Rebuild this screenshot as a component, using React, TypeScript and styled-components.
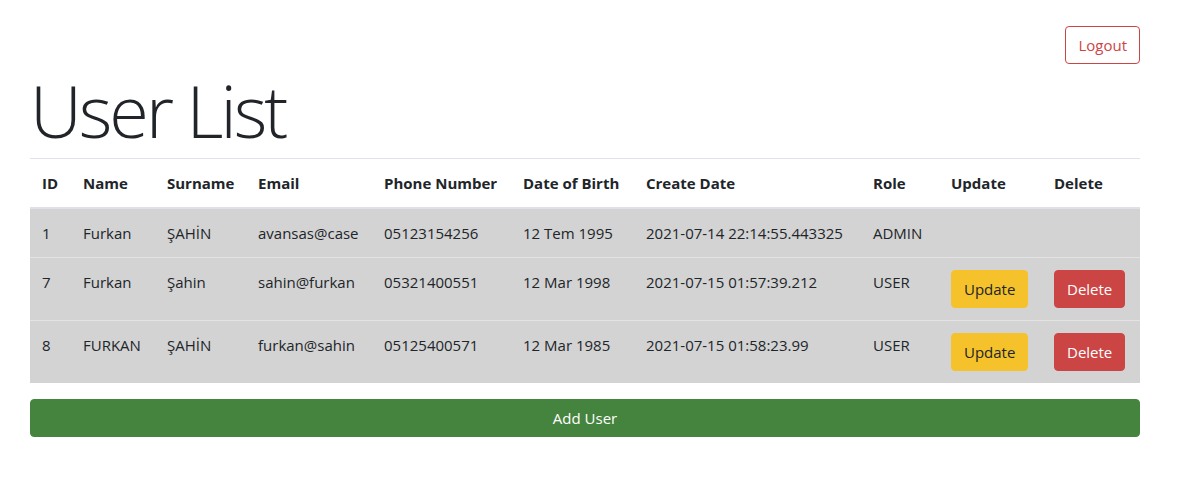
import React from "react";
import styled, { createGlobalStyle } from "styled-components";

const GlobalStyle = createGlobalStyle`
  html, body { margin: 0; padding: 0; background: #fff; }
  body {
    font-family: "Open Sans", "Noto Sans", "Liberation Sans", sans-serif;
    font-size: 16px;
    line-height: 1.5;
    color: #212529;
  }
  * { box-sizing: border-box; }
`;

const Page = styled.div`
  padding: 26px 46px 40px 30px;
  display: flex;
  flex-direction: column;
`;

const TopBar = styled.div`
  display: flex;
  justify-content: flex-end;
`;

const Button = styled.button<{ $variant: "outline-danger" | "warning" | "danger" | "success"; $block?: boolean }>`
  font-family: inherit;
  font-size: 15px;
  line-height: 24px;
  padding: 6px 12px;
  border-radius: 4px;
  border: 1px solid transparent;
  cursor: pointer;
  white-space: nowrap;
  ${({ $block }) => ($block ? "width: 100%; display: block;" : "")}
  ${({ $variant }) => {
    switch ($variant) {
      case "outline-danger":
        return "background: #fff; color: #cc4545; border-color: #cc4545;";
      case "warning":
        return "background: #f5c22b; color: #212529; border-color: #f5c22b;";
      case "danger":
        return "background: #cc4545; color: #fff; border-color: #cc4545;";
      case "success":
        return "background: #45843e; color: #fff; border-color: #45843e;";
    }
  }}
`;

const Title = styled.h1`
  margin: 3px 0 5px;
  font-size: 72px;
  font-weight: 300;
  line-height: 86px;
  letter-spacing: -3px;
  color: #212529;
`;

const Table = styled.table`
  width: 100%;
  border-collapse: collapse;
  table-layout: fixed;
`;

const Th = styled.th`
  text-align: left;
  font-weight: 700;
  padding: 12px;
  vertical-align: bottom;
  border-top: 1px solid #dee2e6;
  border-bottom: 2px solid #dee2e6;
  white-space: nowrap;
  font-size: 15px;
  line-height: 24px;
`;

const Tr = styled.tr`
  background: #d3d3d3;
`;

const Td = styled.td`
  padding: 12px;
  vertical-align: top;
  border-top: 1px solid #e3e3e3;
  white-space: nowrap;
  font-size: 15px;
  line-height: 24px;
`;

const AddWrap = styled.div`
  margin-top: 16px;
`;

const cols = [41, 84, 91, 126, 139, 123, 227, 78, 103, 98];
const headers = ["ID", "Name", "Surname", "Email", "Phone Number", "Date of Birth", "Create Date", "Role", "Update", "Delete"];

type User = {
  id: number;
  name: string;
  surname: string;
  email: string;
  phone: string;
  dob: string;
  created: string;
  role: string;
};

const users: User[] = [
  { id: 1, name: "Furkan", surname: "ŞAHİN", email: "avansas@case", phone: "05123154256", dob: "12 Tem 1995", created: "2021-07-14 22:14:55.443325", role: "ADMIN" },
  { id: 7, name: "Furkan", surname: "Şahin", email: "sahin@furkan", phone: "05321400551", dob: "12 Mar 1998", created: "2021-07-15 01:57:39.212", role: "USER" },
  { id: 8, name: "FURKAN", surname: "ŞAHİN", email: "furkan@sahin", phone: "05125400571", dob: "12 Mar 1985", created: "2021-07-15 01:58:23.99", role: "USER" },
];

export default function App() {
  return (
    <>
      <GlobalStyle />
      <Page>
        <TopBar>
          <Button $variant="outline-danger">Logout</Button>
        </TopBar>
        <Title>User List</Title>
        <Table>
          <colgroup>
            {cols.map((w, i) => (
              <col key={i} style={{ width: w }} />
            ))}
          </colgroup>
          <thead>
            <tr>
              {headers.map((h) => (
                <Th key={h}>{h}</Th>
              ))}
            </tr>
          </thead>
          <tbody>
            {users.map((u) => (
              <Tr key={u.id}>
                <Td>{u.id}</Td>
                <Td>{u.name}</Td>
                <Td>{u.surname}</Td>
                <Td>{u.email}</Td>
                <Td>{u.phone}</Td>
                <Td>{u.dob}</Td>
                <Td>{u.created}</Td>
                <Td>{u.role}</Td>
                <Td>{u.role !== "ADMIN" && <Button $variant="warning">Update</Button>}</Td>
                <Td>{u.role !== "ADMIN" && <Button $variant="danger">Delete</Button>}</Td>
              </Tr>
            ))}
          </tbody>
        </Table>
        <AddWrap>
          <Button $variant="success" $block>
            Add User
          </Button>
        </AddWrap>
      </Page>
    </>
  );
}
